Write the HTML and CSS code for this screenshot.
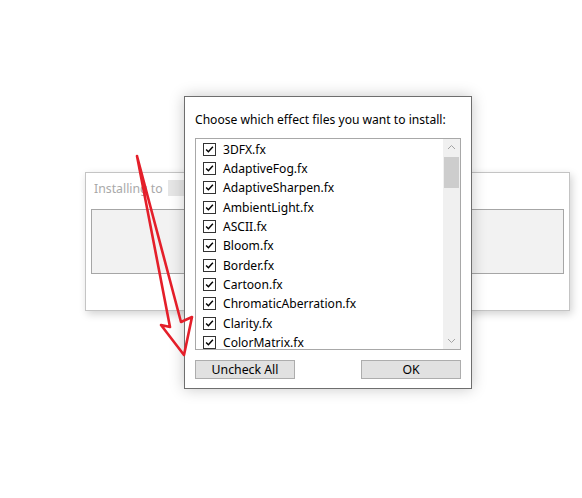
FILE: index.html
```html
<!DOCTYPE html>
<html>
<head>
<meta charset="utf-8">
<link rel="stylesheet" href="styles.css">
</head>
<body>
<div class="desktop">
  <div class="win-back">
    <div class="back-title"><span>Installing to</span><span class="path-box"></span></div>
    <div class="back-progress"></div>
  </div>

  <div class="dialog">
    <div class="prompt">Choose which effect files you want to install:</div>
    <div class="listbox">
      <ul class="items">
        <li class="item"><span class="cb"><svg viewBox="0 0 13 13"><path d="M2.5 6.5 L5.2 9.2 L10.5 3.2"/></svg></span>3DFX.fx</li>
        <li class="item"><span class="cb"><svg viewBox="0 0 13 13"><path d="M2.5 6.5 L5.2 9.2 L10.5 3.2"/></svg></span>AdaptiveFog.fx</li>
        <li class="item"><span class="cb"><svg viewBox="0 0 13 13"><path d="M2.5 6.5 L5.2 9.2 L10.5 3.2"/></svg></span>AdaptiveSharpen.fx</li>
        <li class="item"><span class="cb"><svg viewBox="0 0 13 13"><path d="M2.5 6.5 L5.2 9.2 L10.5 3.2"/></svg></span>AmbientLight.fx</li>
        <li class="item"><span class="cb"><svg viewBox="0 0 13 13"><path d="M2.5 6.5 L5.2 9.2 L10.5 3.2"/></svg></span>ASCII.fx</li>
        <li class="item"><span class="cb"><svg viewBox="0 0 13 13"><path d="M2.5 6.5 L5.2 9.2 L10.5 3.2"/></svg></span>Bloom.fx</li>
        <li class="item"><span class="cb"><svg viewBox="0 0 13 13"><path d="M2.5 6.5 L5.2 9.2 L10.5 3.2"/></svg></span>Border.fx</li>
        <li class="item"><span class="cb"><svg viewBox="0 0 13 13"><path d="M2.5 6.5 L5.2 9.2 L10.5 3.2"/></svg></span>Cartoon.fx</li>
        <li class="item"><span class="cb"><svg viewBox="0 0 13 13"><path d="M2.5 6.5 L5.2 9.2 L10.5 3.2"/></svg></span>ChromaticAberration.fx</li>
        <li class="item"><span class="cb"><svg viewBox="0 0 13 13"><path d="M2.5 6.5 L5.2 9.2 L10.5 3.2"/></svg></span>Clarity.fx</li>
        <li class="item"><span class="cb"><svg viewBox="0 0 13 13"><path d="M2.5 6.5 L5.2 9.2 L10.5 3.2"/></svg></span>ColorMatrix.fx</li>
      </ul>
      <div class="scrollbar">
        <svg class="sb-arrow" viewBox="0 0 17 17"><path d="M5 10 L8.5 6.5 L12 10"/></svg>
        <div class="sb-track"><div class="sb-thumb"></div></div>
        <svg class="sb-arrow" viewBox="0 0 17 17"><path d="M5 7 L8.5 10.5 L12 7"/></svg>
      </div>
    </div>
    <div class="buttons">
      <button class="btn">Uncheck All</button>
      <button class="btn">OK</button>
    </div>
  </div>

  <svg class="annotation" viewBox="0 0 582 498" width="582" height="498">
    <path d="M137 156 L170 327 L161 325 L184 355 L192 317 L181 322 Z"/>
  </svg>
</div>
</body>
</html>
```

FILE: styles.css
```css
html, body {
  margin: 0;
  padding: 0;
  background: #ffffff;
}

.desktop {
  position: relative;
  width: 582px;
  height: 498px;
  overflow: hidden;
  background: #ffffff;
  font-family: "Noto Sans", "Open Sans", "Liberation Sans", sans-serif;
  font-size: 12px;
  color: #000000;
}

/* background installer window */
.win-back {
  position: absolute;
  left: 85px;
  top: 172px;
  width: 473px;
  height: 137px;
  background: #ffffff;
  border: 1px solid #c4c4c4;
  box-shadow: 2px 3px 8px rgba(0, 0, 0, 0.18);
  display: flex;
  flex-direction: column;
  padding: 0 5px;
}

.back-title {
  display: flex;
  align-items: center;
  gap: 5px;
  height: 30px;
  padding-left: 3px;
  font-size: 12.3px;
  color: #a9a9a9;
}

.path-box {
  width: 21px;
  height: 16px;
  background: #e6e6e6;
}

.back-progress {
  margin-top: 6px;
  height: 63px;
  background: #f2f2f2;
  border: 1px solid #a6a6a6;
}

/* foreground dialog */
.dialog {
  position: absolute;
  left: 184px;
  top: 96px;
  width: 266px;
  height: 291px;
  background: #ffffff;
  border: 1px solid #6e6e6e;
  box-shadow: 0 0 14px rgba(0, 0, 0, 0.22);
  display: flex;
  flex-direction: column;
  padding: 0 10px;
}

.prompt {
  height: 41px;
  line-height: 46px;
  font-size: 12.1px;
  white-space: nowrap;
}

.listbox {
  height: 210px;
  border: 1px solid #a8a8a8;
  display: flex;
  overflow: hidden;
}

.items {
  list-style: none;
  margin: 0;
  padding: 0.5px 0 0 7px;
  flex: 1;
}

.item {
  height: 19.35px;
  display: flex;
  align-items: center;
  gap: 7px;
  font-size: 12.1px;
  white-space: nowrap;
}

.cb {
  width: 11px;
  height: 11px;
  border: 1px solid #333333;
  background: #ffffff;
  display: flex;
  flex-shrink: 0;
}

.cb svg {
  width: 11px;
  height: 11px;
}

.cb path {
  fill: none;
  stroke: #000000;
  stroke-width: 1.7;
}

.scrollbar {
  width: 17px;
  background: #f0f0f0;
  display: flex;
  flex-direction: column;
}

.sb-arrow {
  width: 17px;
  height: 17px;
  flex-shrink: 0;
}

.sb-arrow path {
  fill: none;
  stroke: #a3a3a3;
  stroke-width: 1;
}

.sb-track {
  flex: 1;
}

.sb-thumb {
  margin: 1px 1px 0 1px;
  height: 31px;
  background: #cdcdcd;
}

.buttons {
  display: flex;
  justify-content: space-between;
  margin-top: 10px;
}

.btn {
  width: 100px;
  height: 19px;
  padding: 0;
  background: #e1e1e1;
  border: 1px solid #adadad;
  border-radius: 0;
  font-family: "Noto Sans", "Open Sans", "Liberation Sans", sans-serif;
  font-size: 12.3px;
  line-height: 16px;
  color: #000000;
}

/* red hand-drawn arrow annotation */
.annotation {
  position: absolute;
  left: 0;
  top: 0;
  pointer-events: none;
}

.annotation path {
  fill: none;
  stroke: #e41f2a;
  stroke-width: 2.6;
  stroke-linejoin: round;
}
```
